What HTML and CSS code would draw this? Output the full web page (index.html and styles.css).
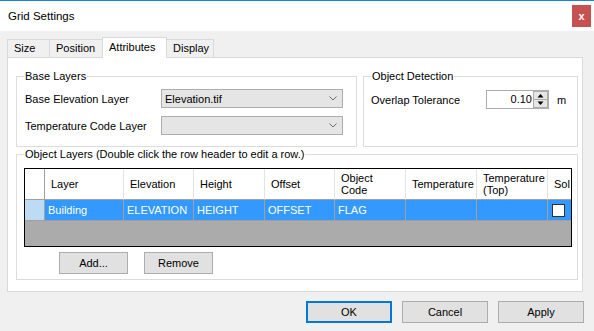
FILE: index.html
```html
<!DOCTYPE html>
<html lang="en">
<head>
    <meta charset="UTF-8">
    <title>Grid Settings</title>
    <link rel="stylesheet" href="styles.css">
</head>
<body>
    <div class="window">
        <!-- Barra de título -->
        <div class="titlebar">
            <span class="title">Grid Settings</span>
            <span class="close">x</span>
        </div>

        <!-- Pestañas -->
        <div class="tabs">
            <div class="tab tab-size">Size</div>
            <div class="tab tab-position">Position</div>
            <div class="tab tab-attributes active">Attributes</div>
            <div class="tab tab-display">Display</div>
        </div>

        <div class="panel">
            <div class="row-top">
                <fieldset class="group group-base">
                    <legend>Base Layers</legend>
                    <div class="base-body">
                        <span>Base Elevation Layer</span>
                        <div class="combo">
                            <span>Elevation.tif</span>
                            <svg class="chevron" width="8" height="5" viewBox="0 0 8 5"><path d="M0.5 0.5l3.5 3.5 3.5-3.5" fill="none" stroke="#6d6d6d"/></svg>
                        </div>
                        <span>Temperature Code Layer</span>
                        <div class="combo">
                            <span></span>
                            <svg class="chevron" width="8" height="5" viewBox="0 0 8 5"><path d="M0.5 0.5l3.5 3.5 3.5-3.5" fill="none" stroke="#6d6d6d"/></svg>
                        </div>
                    </div>
                </fieldset>

                <fieldset class="group group-detect">
                    <legend>Object Detection</legend>
                    <div class="detect-body">
                        <span class="detect-label">Overlap Tolerance</span>
                        <div class="spin">
                            <span class="spin-value">0.10</span>
                            <svg width="15" height="17" viewBox="0 0 15 17"><rect x="0.5" y="0.5" width="14" height="16" fill="#e5e5e5" stroke="#adadad"/><line x1="1" y1="8.5" x2="14" y2="8.5" stroke="#adadad"/><path d="M4.5 6.5h6l-3-3.5z" fill="#000"/><path d="M4.5 10.5h6l-3 3.5z" fill="#000"/></svg>
                        </div>
                        <span class="unit">m</span>
                    </div>
                </fieldset>
            </div>

            <fieldset class="group group-objects">
                <legend>Object Layers (Double click the row header to edit a row.)</legend>
                <div class="objects-body">
                    <div class="grid">
                        <div class="grid-row grid-head">
                            <div class="cell rh w-rh"></div>
                            <div class="cell w-layer">Layer</div>
                            <div class="cell w-elev">Elevation</div>
                            <div class="cell w-height">Height</div>
                            <div class="cell w-offset">Offset</div>
                            <div class="cell w-code">Object<br>Code</div>
                            <div class="cell w-temp">Temperature</div>
                            <div class="cell w-top">Temperature<br>(Top)</div>
                            <div class="cell w-sol">Sol</div>
                        </div>
                        <div class="grid-row grid-data">
                            <div class="cell rh w-rh"></div>
                            <div class="cell w-layer">Building</div>
                            <div class="cell w-elev">ELEVATION</div>
                            <div class="cell w-height">HEIGHT</div>
                            <div class="cell w-offset">OFFSET</div>
                            <div class="cell w-code">FLAG</div>
                            <div class="cell w-temp"></div>
                            <div class="cell w-top"></div>
                            <div class="cell w-sol sol"><span class="check"></span></div>
                        </div>
                    </div>
                    <div class="grid-buttons">
                        <button class="btn btn-small">Add...</button>
                        <button class="btn btn-small">Remove</button>
                    </div>
                </div>
            </fieldset>
        </div>

        <!-- Botones del diálogo -->
        <div class="dialog-buttons">
            <button class="btn btn-dialog default">OK</button>
            <button class="btn btn-dialog">Cancel</button>
            <button class="btn btn-dialog">Apply</button>
        </div>
    </div>
</body>
</html>
```

FILE: styles.css
```css
body {
    margin: 0;
    background: #f0f0f0;
    font-family: "Liberation Sans", Arial, sans-serif;
    font-size: 11px;
    color: #000;
}
.window {
    width: 594px;
    height: 331px;
    overflow: hidden;
}
.titlebar {
    height: 30px;
    border-top: 1px solid #1883d7;
    background: #fff;
    display: flex;
    align-items: center;
    padding-left: 8px;
}
.title {
    font-size: 11.5px;
}
.close {
    margin-left: auto;
    margin-right: 3px;
    width: 19px;
    height: 22px;
    background: #c75050;
    color: #fff;
    font-weight: bold;
    display: flex;
    align-items: center;
    justify-content: center;
}
/* Pestañas */
.tabs {
    display: flex;
    align-items: flex-end;
    height: 20px;
    margin-top: 6px;
    padding-left: 7px;
}
.tab {
    box-sizing: border-box;
    height: 18px;
    border: 1px solid #d9d9d9;
    border-bottom: none;
    margin-left: -1px;
    padding-left: 6px;
    line-height: 17px;
}
.tab:first-child {
    margin-left: 0;
}
.tab.active {
    height: 21px;
    line-height: 18px;
    background: #fff;
    margin-bottom: -1px;
    position: relative;
    z-index: 1;
}
.tab-size { width: 43px; }
.tab-position { width: 54px; }
.tab-attributes { width: 65px; }
.tab-display { width: 48px; }

.panel {
    box-sizing: border-box;
    height: 235px;
    margin: 0 11px 0 7px;
    border: 1px solid #d9d9d9;
    background: #fff;
    padding: 11px 4px 8px 8px;
}
.row-top {
    display: flex;
    gap: 6px;
    height: 78px;
}
fieldset.group {
    box-sizing: border-box;
    margin: 0;
    padding: 0;
    min-width: 0;
    border: 1px solid #dcdcdc;
}
legend {
    margin-left: 7px;
    padding: 0 1px;
    line-height: 14px;
}
.group-base {
    width: 341px;
    height: 78px;
}
.group-detect {
    width: 215px;
    height: 78px;
}
.group-objects {
    margin-top: 3px;
    height: 133px;
}
.base-body {
    display: grid;
    grid-template-columns: 136px 182px;
    row-gap: 8px;
    align-items: center;
    padding: 6px 0 0 8px;
}
.combo {
    box-sizing: border-box;
    height: 19px;
    border: 1px solid #adadad;
    background: #e5e5e5;
    display: flex;
    align-items: center;
    padding-left: 3px;
}
.chevron {
    margin-left: auto;
    margin-right: 5px;
}
.detect-body {
    display: flex;
    align-items: center;
    padding: 7px 0 0 7px;
}
.detect-label {
    width: 115px;
}
.spin {
    box-sizing: border-box;
    width: 63px;
    height: 19px;
    border: 1px solid #adadad;
    background: #fff;
    display: flex;
}
.spin-value {
    flex: 1;
    text-align: right;
    padding-right: 1px;
    line-height: 17px;
}
.unit {
    margin-left: 8px;
}
/* Tabla de capas */
.objects-body {
    padding: 7px 0 0 7px;
}
.grid {
    box-sizing: border-box;
    width: 548px;
    height: 79px;
    border: 1px solid #000;
    background: #ababab;
    overflow: hidden;
}
.grid-row {
    display: flex;
    white-space: nowrap;
}
.cell {
    flex: none;
    box-sizing: border-box;
    display: flex;
    align-items: center;
    overflow: hidden;
    line-height: 12px;
}
.grid-head .cell {
    height: 31px;
    background: #fff;
    border-right: 1px solid #e4e4e4;
    border-bottom: 1px solid #a0a0a0;
    padding-left: 6px;
}
.grid-head .rh {
    border-right-color: #a0a0a0;
}
.grid-data .cell {
    height: 21px;
    background: #3399ff;
    color: #fff;
    border-right: 1px solid #a0a0a0;
    border-bottom: 1px solid #a0a0a0;
    padding-left: 3px;
}
.grid-data .rh {
    background: #bddcf4;
}
.grid-data .sol {
    padding-left: 4px;
}
.check {
    box-sizing: border-box;
    width: 13px;
    height: 13px;
    border: 1px solid #333;
    background: #fff;
}
.w-rh { width: 20px; }
.w-layer { width: 79px; }
.w-elev { width: 70px; }
.w-height { width: 71px; }
.w-offset { width: 70px; }
.w-code { width: 71px; }
.w-temp { width: 71px; }
.w-top { width: 71px; }
.w-sol { width: 40px; }

.btn {
    box-sizing: border-box;
    height: 22px;
    padding: 0;
    border: 1px solid #adadad;
    background: #e1e1e1;
    font: inherit;
    color: #000;
}
.grid-buttons {
    display: flex;
    gap: 16px;
    margin: 5px 0 0 35px;
}
.btn-small {
    width: 69px;
}
.dialog-buttons {
    display: flex;
    justify-content: flex-end;
    gap: 10px;
    margin-top: 9px;
    padding-right: 10px;
}
.btn-dialog {
    width: 86px;
}
.btn-dialog.default {
    border: 2px solid #0078d7;
}
```
